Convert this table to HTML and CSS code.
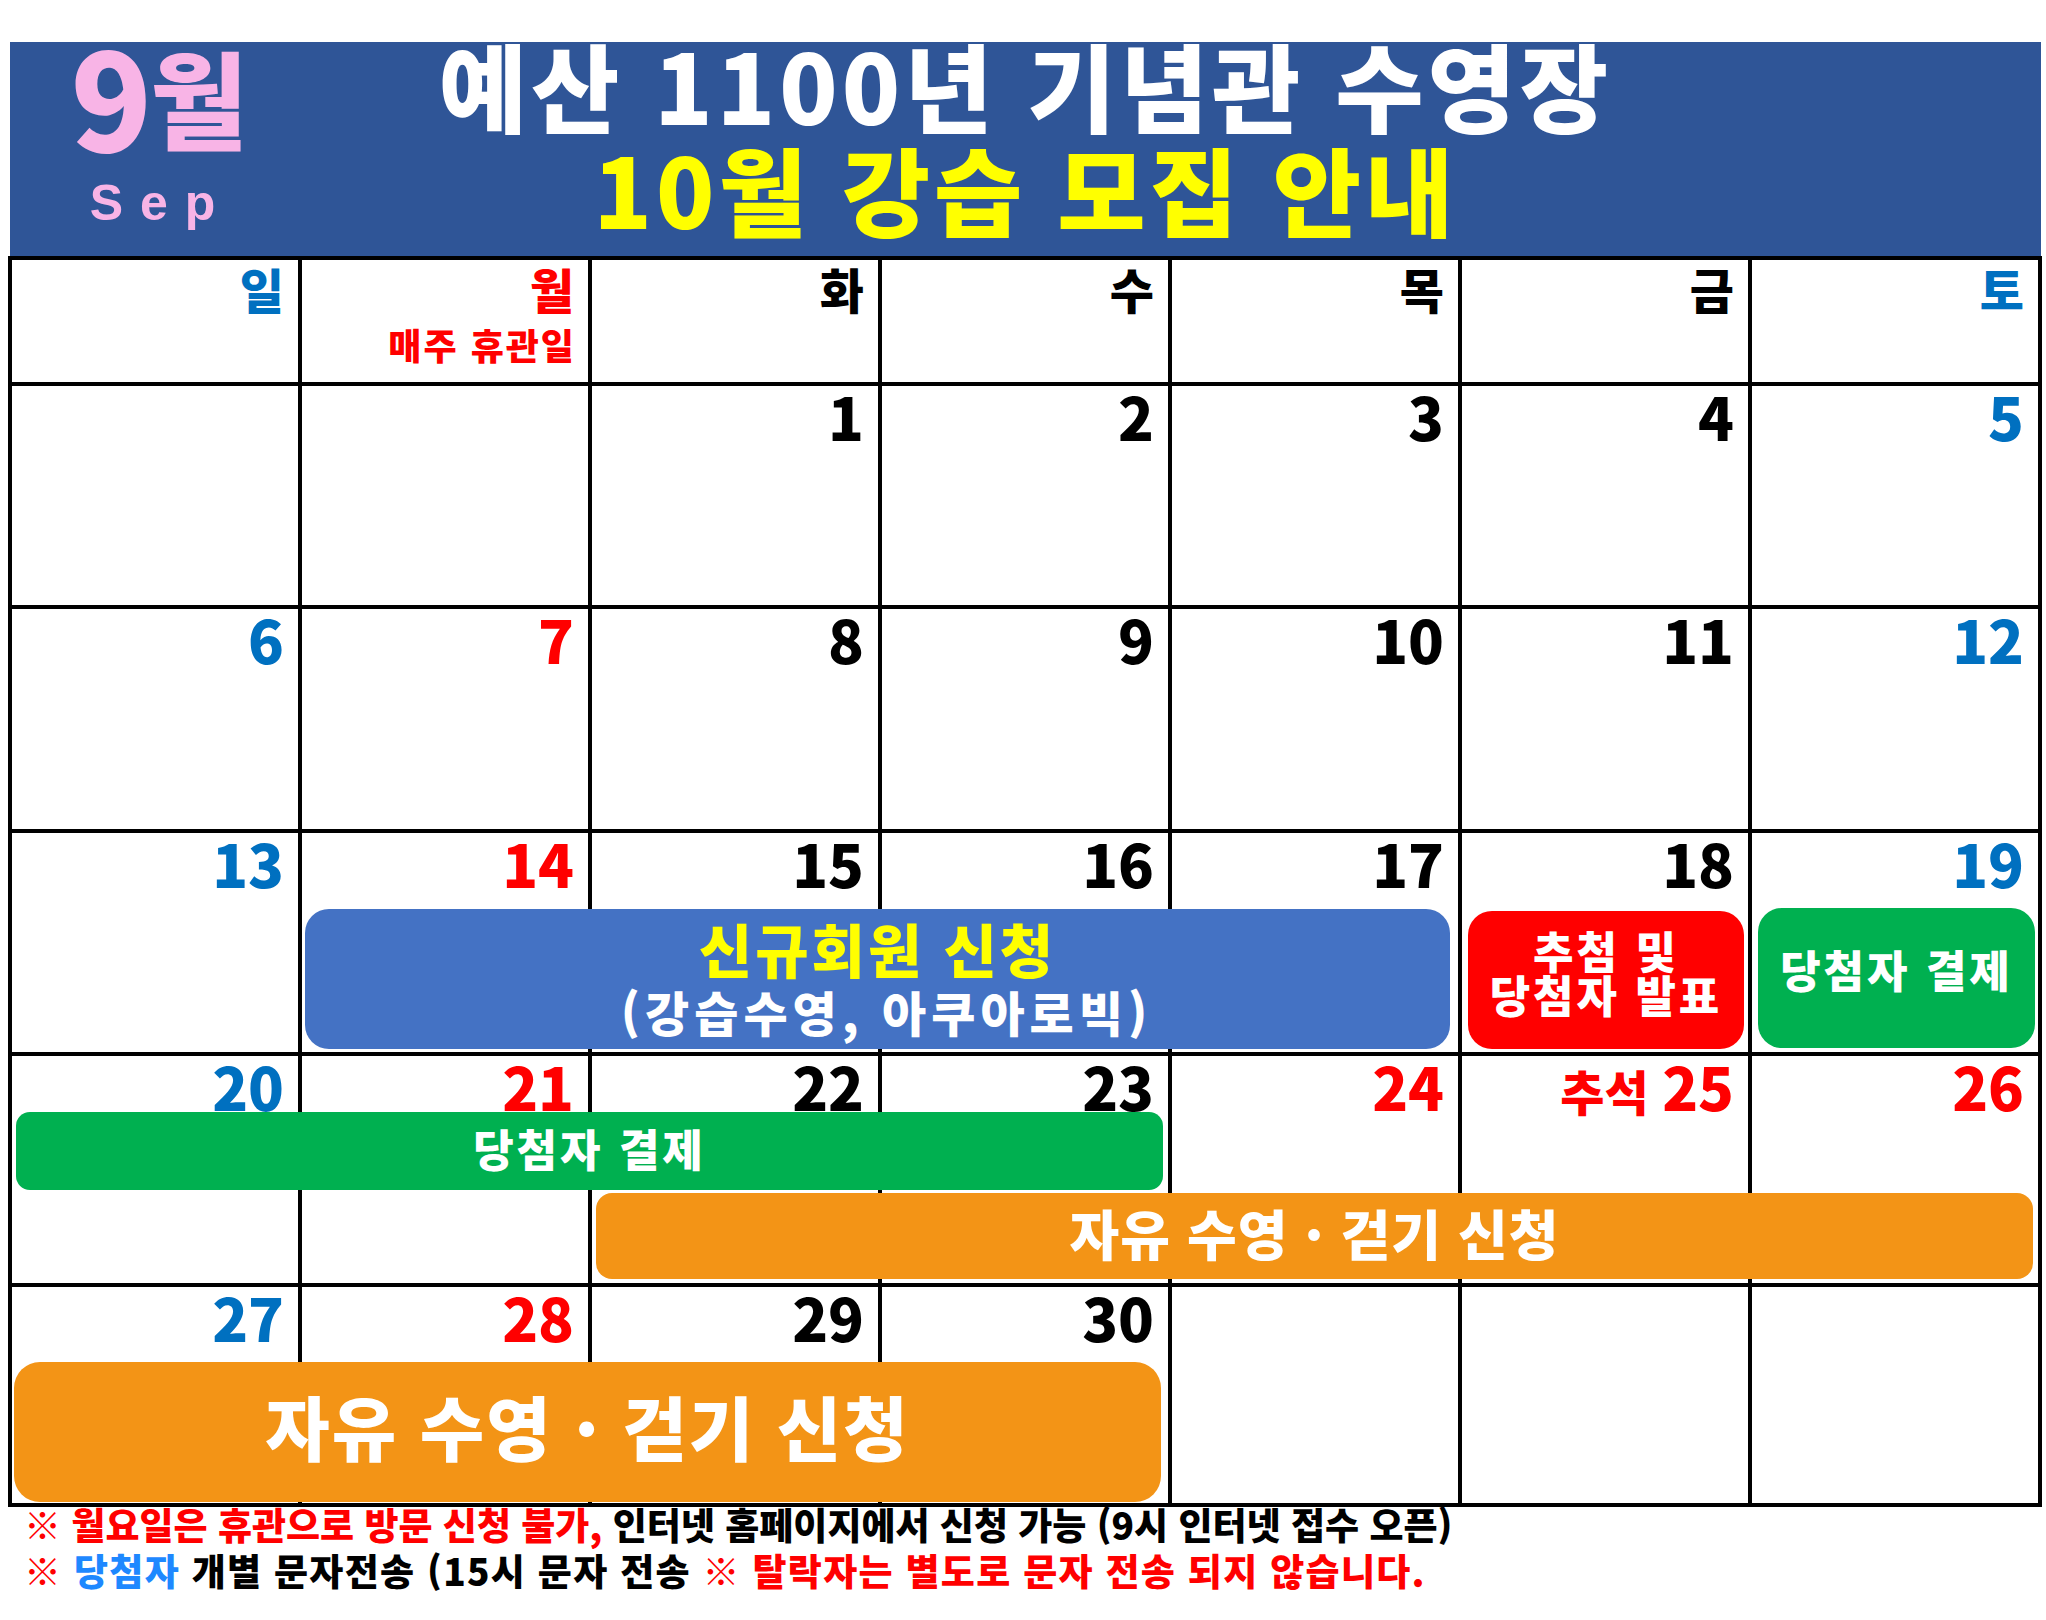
FILE: index.html
```html
<!DOCTYPE html>
<html lang="ko">
<head>
<meta charset="utf-8">
<title>예산 1100년 기념관 수영장 10월 강습 모집 안내</title>
<link rel="stylesheet" href="styles.css">
</head>
<body>
<div class="page">
  <header class="banner">
    <div class="month">
      <div class="month-num"><span class="m-digit">9</span><span class="m-kor">월</span></div>
      <div class="month-en">Sep</div>
    </div>
    <div class="title">
      <div class="t1">예산 1100년 기념관 수영장</div>
      <div class="t2">10월 강습 모집 안내</div>
    </div>
    <div></div>
  </header>

  <div class="cal">
    <div class="cells">
      <div class="cell dow blue">일</div>
      <div class="cell dow red">월<div class="dow-note">매주 휴관일</div></div>
      <div class="cell dow">화</div>
      <div class="cell dow">수</div>
      <div class="cell dow">목</div>
      <div class="cell dow">금</div>
      <div class="cell dow blue">토</div>

      <div class="cell"></div>
      <div class="cell"></div>
      <div class="cell">1</div>
      <div class="cell">2</div>
      <div class="cell">3</div>
      <div class="cell">4</div>
      <div class="cell blue">5</div>

      <div class="cell blue">6</div>
      <div class="cell red">7</div>
      <div class="cell">8</div>
      <div class="cell">9</div>
      <div class="cell">10</div>
      <div class="cell">11</div>
      <div class="cell blue">12</div>

      <div class="cell blue">13</div>
      <div class="cell red">14</div>
      <div class="cell">15</div>
      <div class="cell">16</div>
      <div class="cell">17</div>
      <div class="cell">18</div>
      <div class="cell blue">19</div>

      <div class="cell blue">20</div>
      <div class="cell red">21</div>
      <div class="cell">22</div>
      <div class="cell">23</div>
      <div class="cell red">24</div>
      <div class="cell red"><span class="holiday">추석 </span>25</div>
      <div class="cell red">26</div>

      <div class="cell blue">27</div>
      <div class="cell red">28</div>
      <div class="cell">29</div>
      <div class="cell">30</div>
      <div class="cell"></div>
      <div class="cell"></div>
      <div class="cell"></div>
    </div>

    <div class="events">
      <div class="ev ev-new">
        <div class="ev-new-main">신규회원 신청</div>
        <div class="ev-new-sub">(강습수영, 아쿠아로빅)</div>
      </div>
      <div class="ev ev-draw">
        <div>추첨 및</div>
        <div>당첨자 발표</div>
      </div>
      <div class="ev ev-pay19">당첨자 결제</div>
      <div class="ev ev-pay-bar">당첨자 결제</div>
      <div class="ev ev-free-bar">자유 수영 · 걷기 신청</div>
      <div class="ev ev-free-big">자유 수영 · 걷기 신청</div>
    </div>
  </div>

  <div class="notes">
    <div class="notes-inner">
      <div class="note-line"><span class="n-red">※ 월요일은 휴관으로 방문 신청 불가,</span> 인터넷 홈페이지에서 신청 가능 (9시 인터넷 접수 오픈)</div>
      <div class="note-line note-wide"><span class="n-red">※</span> <span class="n-blue">당첨자</span> 개별 문자전송 (15시 문자 전송 <span class="n-red">※ 탈락자는 별도로 문자 전송 되지 않습니다.</span></div>
    </div>
  </div>
</div>
</body>
</html>
```

FILE: styles.css
```css
* {
  box-sizing: border-box;
}

html, body {
  margin: 0;
  padding: 0;
  background: #ffffff;
}

body {
  font-family: "Noto Sans CJK KR", "Noto Sans", sans-serif;
  width: 2046px;
  height: 1620px;
  overflow: hidden;
}

.page {
  padding-top: 42px;
}

/* ---------- banner ---------- */
.banner {
  margin-left: 10px;
  width: 2031px;
  height: 214px;
  background: #2F5597;
  display: grid;
  grid-template-columns: 1fr auto 1fr;
}

.month {
  width: 240px;
  padding-left: 58px;
  display: flex;
  flex-direction: column;
  align-items: center;
  color: #F8B4E6;
}

.month-num {
  font-weight: 900;
  display: flex;
  align-items: flex-start;
  white-space: nowrap;
}

.m-digit {
  font-size: 134px;
  line-height: 0.78;
  letter-spacing: -2px;
}

.m-kor {
  font-size: 106px;
  line-height: 1;
}

.month-en {
  font-family: "Liberation Sans", Arial, sans-serif;
  font-weight: 700;
  font-size: 50px;
  letter-spacing: 17px;
  margin-right: -4px;
  margin-top: 30px;
  line-height: 1;
}

.title {
  text-align: center;
  font-weight: 900;
  font-size: 96px;
  line-height: 104px;
  letter-spacing: 4px;
  margin-top: -10px;
  white-space: nowrap;
}

.t1 {
  color: #ffffff;
}

.t2 {
  color: #FFFF00;
}

/* ---------- calendar ---------- */
.cal {
  margin-left: 8px;
  width: 2034px;
  display: grid;
}

.cells,
.events {
  grid-area: 1 / 1;
  display: grid;
  grid-template-columns: repeat(7, 286px);
  grid-template-rows: 122px 219px 220px 219px 227px 216px;
  gap: 4px;
  padding: 4px;
}

.cells {
  background: #000000;
}

.cell {
  background: #ffffff;
  text-align: right;
  padding-right: 14px;
  font-weight: 900;
  font-size: 59px;
  line-height: 1;
  color: #000000;
  white-space: nowrap;
}

.cell.blue {
  color: #0070C0;
}

.cell.red {
  color: #FF0000;
}

.holiday {
  font-size: 48px;
}

.dow {
  font-size: 48px;
  padding-top: 4px;
}

.dow-note {
  font-size: 36px;
  letter-spacing: 2px;
  margin-right: -2px;
  margin-top: 14px;
}

/* ---------- events ---------- */
.ev {
  display: flex;
  flex-direction: column;
  align-items: center;
  justify-content: center;
  font-weight: 900;
  color: #ffffff;
  white-space: nowrap;
  line-height: 1;
}

.ev-new {
  grid-column: 2 / 6;
  grid-row: 4;
  align-self: end;
  height: 140px;
  margin: 0 8px 3px 3px;
  background: #4472C4;
  border-radius: 24px;
}

.ev-new-main {
  color: #FFFF00;
  font-size: 58px;
  letter-spacing: 3px;
  margin-top: -4px;
}

.ev-new-sub {
  font-size: 48px;
  letter-spacing: 5px;
  margin-top: 10px;
  padding-left: 18px;
}

.ev-draw {
  grid-column: 6;
  grid-row: 4;
  align-self: end;
  height: 138px;
  margin: 0 4px 3px 6px;
  background: #FF0000;
  border-radius: 24px;
  font-size: 44px;
  line-height: 44px;
  letter-spacing: 3px;
  padding-bottom: 16px;
}

.ev-pay19 {
  grid-column: 7;
  grid-row: 4;
  align-self: end;
  height: 140px;
  margin: 0 3px 4px 6px;
  background: #00B050;
  border-radius: 24px;
  font-size: 44px;
  letter-spacing: 3px;
  padding-bottom: 18px;
}

.ev-pay-bar {
  grid-column: 1 / 5;
  grid-row: 5;
  align-self: start;
  height: 78px;
  margin: 56px 5px 0 4px;
  background: #00B050;
  border-radius: 14px;
  font-size: 44px;
  letter-spacing: 3px;
  padding-bottom: 6px;
}

.ev-free-bar {
  grid-column: 3 / 8;
  grid-row: 5;
  align-self: end;
  height: 86px;
  margin: 0 5px 4px 4px;
  background: #F39416;
  border-radius: 16px;
  font-size: 54px;
  letter-spacing: 1px;
  padding-bottom: 6px;
}

.ev-free-big {
  grid-column: 1 / 5;
  grid-row: 6;
  align-self: end;
  height: 140px;
  margin: 0 7px 1px 2px;
  background: #F39416;
  border-radius: 26px;
  font-size: 70px;
  letter-spacing: 2px;
  padding-bottom: 12px;
}

/* ---------- notes ---------- */
.notes {
  height: 100px;
  overflow: hidden;
}

.notes-inner {
  margin-top: -6px;
  padding-left: 24px;
  font-weight: 900;
  font-size: 37px;
  line-height: 46px;
  color: #000000;
  white-space: nowrap;
}

.note-wide {
  letter-spacing: 1.3px;
}

.n-red {
  color: #FF0000;
}

.n-blue {
  color: #1E88FF;
}
```
